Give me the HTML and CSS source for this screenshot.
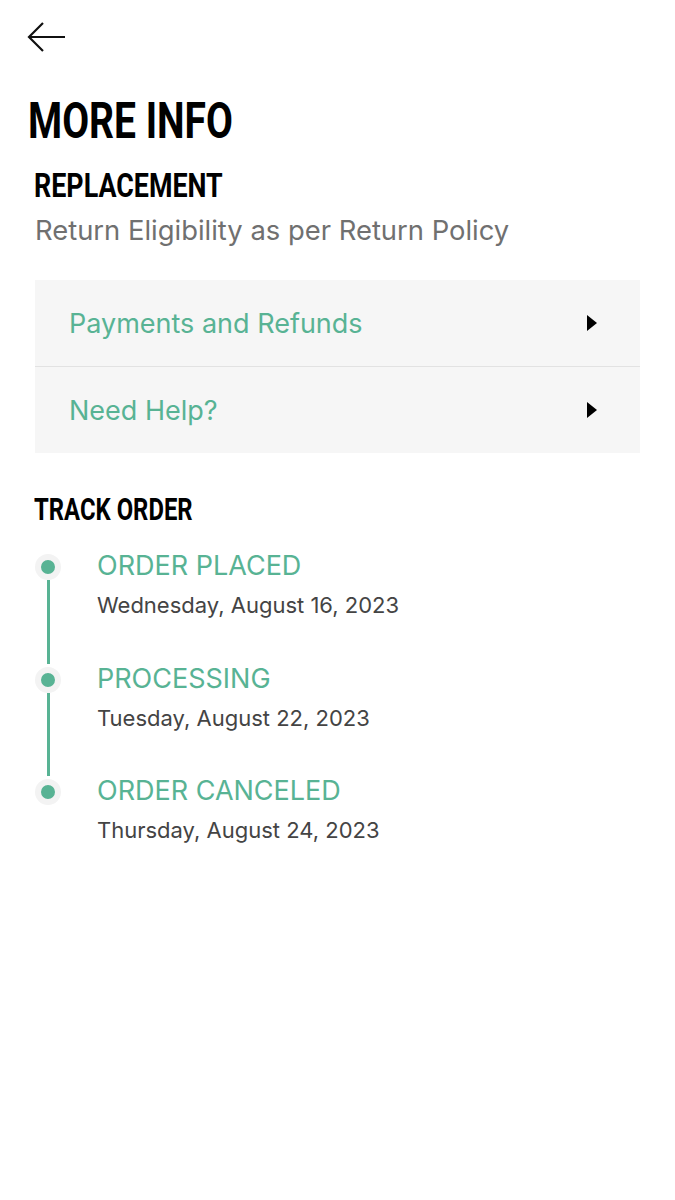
FILE: index.html
```html
<!DOCTYPE html>
<html lang="en">
<head>
    <meta charset="UTF-8">
    <meta name="viewport" content="width=device-width, initial-scale=1.0">
    <title>More Info</title>
    <link rel="stylesheet" href="styles.css">
</head>
<body>
    <header class="topbar">
        <a href="#" class="back" aria-label="Back">
            <svg width="40" height="32" viewBox="0 0 40 32">
                <path d="M38 16H2.5M16 2L2 16l14 14" fill="none" stroke="#111" stroke-width="2.2"/>
            </svg>
        </a>
    </header>

    <main class="page">
        <h1 class="title"><span>MORE INFO</span></h1>

        <section class="block">
            <h2 class="subtitle"><span>REPLACEMENT</span></h2>
            <p class="note">Return Eligibility as per Return Policy</p>

            <div class="links">
                <a href="#" class="link-row">
                    <span>Payments and Refunds</span>
                    <span class="caret"></span>
                </a>
                <a href="#" class="link-row">
                    <span>Need Help?</span>
                    <span class="caret"></span>
                </a>
            </div>
        </section>

        <section class="block track">
            <h2 class="subtitle small"><span>TRACK ORDER</span></h2>
            <ul class="timeline">
                <li class="step">
                    <div class="marker"><span class="dot"></span><span class="line"></span></div>
                    <div class="step-text">
                        <div class="status">ORDER PLACED</div>
                        <div class="date">Wednesday, August 16, 2023</div>
                    </div>
                </li>
                <li class="step">
                    <div class="marker"><span class="dot"></span><span class="line"></span></div>
                    <div class="step-text">
                        <div class="status">PROCESSING</div>
                        <div class="date">Tuesday, August 22, 2023</div>
                    </div>
                </li>
                <li class="step last">
                    <div class="marker"><span class="dot"></span></div>
                    <div class="step-text">
                        <div class="status">ORDER CANCELED</div>
                        <div class="date">Thursday, August 24, 2023</div>
                    </div>
                </li>
            </ul>
        </section>
    </main>
</body>
</html>
```

FILE: styles.css
```css
body {
    margin: 0;
    background: #fff;
    font-family: Inter, "Noto Sans", sans-serif;
    color: #222;
}
.topbar {
    padding: 21px 0 0 27px;
    height: 32px;
}
.back {
    display: inline-block;
}
.back svg {
    display: block;
}
.page {
    padding: 0 35px 40px 35px;
}

/* condensed headings */
.title,
.subtitle {
    font-family: Roboto, "Liberation Sans", sans-serif;
    font-weight: 700;
    color: #000;
    white-space: nowrap;
}
.title span,
.subtitle span {
    display: inline-block;
    transform: scaleX(0.78);
    transform-origin: left center;
}
.title {
    font-size: 50px;
    line-height: 50px;
    margin: 43px 0 0 -7px;
}
.subtitle {
    font-size: 34px;
    line-height: 40px;
    margin: 19px 0 0 -1px;
}
.subtitle span {
    transform: scaleX(0.79);
}
.subtitle.small {
    font-size: 31px;
}
.subtitle.small span {
    transform: scaleX(0.77);
}
.note {
    margin: 8px 0 0 0;
    font-size: 27.4px;
    line-height: 34px;
    color: #707070;
}
.links {
    margin-top: 33px;
    background: #f6f6f6;
}
.link-row {
    display: flex;
    align-items: center;
    justify-content: space-between;
    height: 86px;
    padding: 0 43px 0 34px;
    font-size: 27px;
    color: #58b394;
    text-decoration: none;
    border-bottom: 1px solid #e2e2e2;
}
.link-row:last-child {
    border-bottom: none;
}
.caret {
    width: 0;
    height: 0;
    border-top: 8.5px solid transparent;
    border-bottom: 8.5px solid transparent;
    border-left: 10px solid #000;
}
.track .subtitle {
    margin-top: 37px;
}

/* timeline */
.timeline {
    list-style: none;
    margin: 21px 0 0 0;
    padding: 0;
}
.step {
    display: flex;
    gap: 36px;
    height: 112.5px;
}
.step.last {
    height: auto;
}
.marker {
    width: 26px;
    display: flex;
    flex-direction: column;
    align-items: center;
    padding-top: 3px;
}
.dot {
    width: 14px;
    height: 14px;
    border-radius: 50%;
    background: #58b394;
    border: 6px solid #f3f3f3;
    flex: none;
}
.line {
    width: 3px;
    flex: 1;
    background: #58b394;
}
.status {
    font-size: 27px;
    line-height: 30px;
    color: #58b394;
}
.date {
    margin-top: 10px;
    font-size: 22px;
    line-height: 28px;
    color: #444;
}
```
